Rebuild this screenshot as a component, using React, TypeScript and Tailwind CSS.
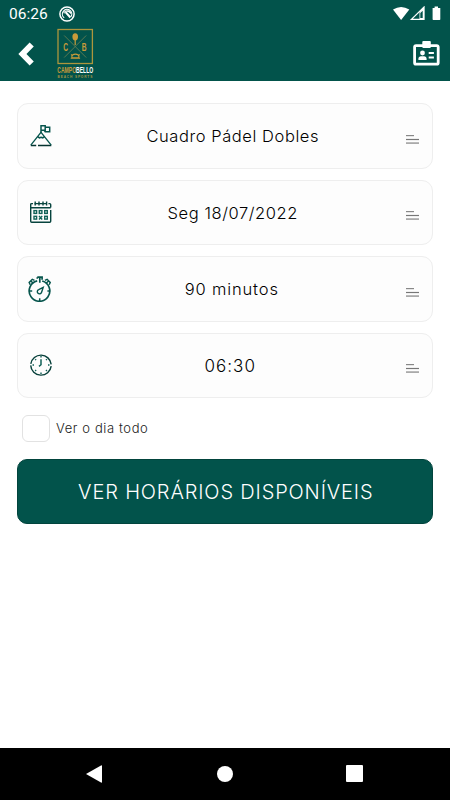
import { ReactNode } from 'react';

interface FieldRowProps {
    icon: ReactNode;
    label: string;
    className: string;
}

function MountainFlagIcon() {
    return (
        <svg width="24" height="24" viewBox="0 0 24 24" fill="none" stroke="#07554d" strokeWidth="1.3">
            <path d="M1.8 21.4H7.2M9 21.4h13.3" stroke="#04332f" strokeWidth="1.5" />
            <path d="M1.8 21.2 12 8.3l10.2 12.9" />
            <path d="M12 9V1M12 1.7h4.2v4.6H12M16.2 3.3h4.5v4.4h-4.5l-1-1.4M8.7 12.6l1.7 1.2 1.7-.6 1.7.6 1.7-1.2" strokeWidth="1.5" />
        </svg>
    );
}

function CalendarIcon() {
    return (
        <svg width="24" height="24" viewBox="0 0 24 24" fill="none" stroke="#07443e" strokeWidth="1.4">
            <path d="M4 3.6H2.7q-1 0-1 1v16.7q0 1 1 1h18q1 0 1-1V10M5.6 3.6h12M19.4 3.6h1.3q1 0 1 1v3M1.7 7.7h20" />
            <path d="M6.2 1.5v4M10 1.5v4M14 1.5v4M17.6 1.5v4" />
            <g stroke="#116258">
                <rect x="5" y="10.6" width="2.6" height="2.8" />
                <rect x="10.3" y="10.6" width="2.6" height="2.8" />
                <rect x="15.7" y="10.6" width="2.6" height="2.8" />
                <rect x="5" y="16.3" width="2.6" height="2.8" />
                <path d="m10 16 3.2 3.4m0-3.4L10 19.4" />
                <rect x="15.7" y="16.3" width="2.6" height="2.8" />
            </g>
        </svg>
    );
}

function StopwatchIcon() {
    return (
        <svg className="-ml-[2px]" width="24" height="26" viewBox="0 0 24 26" fill="none" stroke="#07554d" strokeWidth="1.7">
            <path d="M9.2 4.9a10.3 10.3 0 1 0 5 .1M9.3 1.2h4.8v2.6M9.3 1.2v1.5M11.8 2v4.7" />
            <path d="m2.2 8.7-1-2.2 3.1-3.2 2.2 1.1M3.1 5.2l2.2 2M21.2 8.7l1-2.2-3.1-3.2-2.2 1.1M20.3 5.2l-2.2 2" strokeWidth="1.5" />
            <path d="M1.7 15.1h2.5M19.4 15.1h2.5M11.7 25v-2.8" strokeWidth="1.5" />
            <path d="m15.2 11.4-4.5 2.2a2.2 2.2 0 1 0 2.9 2.7Z" strokeWidth="1.4" />
        </svg>
    );
}

function ClockIcon() {
    return (
        <svg width="24" height="24" viewBox="0 0 24 24" fill="none" stroke="#063f39">
            <path d="M1.8 10.8a10.3 10.3 0 0 1 20.4.5M22.2 13.2a10.3 10.3 0 0 1-20.5-.8" strokeWidth="1.4" />
            <path d="M12 6.3v5.4l-2 1.7" stroke="#116258" strokeWidth="1.5" />
            <path d="M12 3v1.4M12 19.5V21M3.5 12H5M19 12h1.5M6.2 6.2l.9.9M17 17l.9.9M17.9 6.2l-.9.9M7.1 17l-.9.9" stroke="#116258" strokeWidth="1.4" />
        </svg>
    );
}

function FieldRow({ icon, label, className }: FieldRowProps) {
    return (
        <button className="flex h-[65.5px] w-full items-center rounded-[11px] border border-[#eeeeee] bg-[#fdfdfd] pr-[13px] pl-[11px]">
            <span className="flex w-6 justify-center">{icon}</span>
            <span className={`flex-1 pt-[2px] text-center font-light whitespace-nowrap text-black ${className}`}>{label}</span>
            <svg className="mt-[7px]" width="13" height="9" viewBox="0 0 13 9">
                <path d="M0 .6h8" stroke="#888" strokeWidth="1.2" />
                <path d="M0 4.5h13" stroke="#777" strokeWidth="1.2" />
                <path d="M0 8.1h13" stroke="#aaa" strokeWidth="1.8" />
            </svg>
        </button>
    );
}

function Logo() {
    return (
        <svg width="42" height="53" viewBox="0 0 42 53">
            <rect x="1" y="2.5" width="34.4" height="34" fill="none" stroke="#ad963d" strokeWidth="1.3" />
            <path d="m7.2 8.5 22 22m0-22-22 22" stroke="#6f8253" strokeWidth=".8" />
            <ellipse cx="18.2" cy="9.8" rx="2.8" ry="3.6" fill="#c79b3a" />
            <path d="M18.2 12v6" stroke="#c79b3a" strokeWidth="1.2" />
            <path d="M14.9 30.8v-1.5q.3-2.2 3.5-2.2t3.5 2.2v1.5ZM13.7 31.2h9.4M14 27.5l1.2 1M22.7 27.5l-1.2 1" fill="none" stroke="#c79b3a" strokeWidth="1.1" />
            <g fontFamily="'Liberation Sans', sans-serif" fontWeight="700" fill="#c79b3a">
                <text transform="translate(6.3 24) scale(.58 1)" fontSize="11.5">C</text>
                <text transform="translate(24.7 24) scale(.58 1)" fontSize="11.5">B</text>
                <text transform="translate(.3 45.8) scale(.55 1)" fontSize="9.2">
                    CAMPO<tspan fill="#fff">BELLO</tspan>
                </text>
                <text x=".6" y="50.8" fontSize="3.2" letterSpacing=".85" fill="#a79342">BEACH SPORTS</text>
            </g>
        </svg>
    );
}

function Header() {
    return (
        <header className="h-[81px] bg-[#02534b] text-white">
            <div className="flex h-[27px] items-center pr-2 pl-[9px]">
                <span className="mt-[2px] font-['Roboto',sans-serif] text-[15.5px] leading-none">06:26</span>
                <svg className="ml-[11.5px]" width="16" height="16" viewBox="0 0 16 16" fill="none" stroke="white">
                    <circle cx="8" cy="8" r="7.1" strokeWidth="1.5" />
                    <path d="M5.2 11.8A4.7 4.7 0 1 1 12 10.7" strokeWidth="1.2" />
                    <path d="M4.4 6.5q2-3.3 5.8-2 2.5 1.4 2.2 4-3-3.4-5.2-3.1-1.8.4-2.1 2.5Z" fill="white" stroke="none" />
                    <path d="m6.5 6 4.9 5.5" strokeWidth="2" />
                </svg>
                <svg className="ml-auto" width="49" height="16" viewBox="0 0 49 16">
                    <path d="M0 3.5Q8.1-1.5 16.3 3.5L8.1 14Z" fill="white" />
                    <path d="M18.4 13.4 31 1.1v12.3Z" fill="none" stroke="white" strokeWidth="1.3" />
                    <path d="M26.5 6 31 1.1v12.3h-4.5Z" fill="white" />
                    <path d="m27.3 7 2.4-2.3v7.3h-2.4Z" fill="#02534b" />
                    <path d="M39.6 2h2V.5H45V2h2.3v11.3q0 .7-.7.7h-6.3q-.7 0-.7-.7Z" fill="white" />
                </svg>
            </div>
            <div className="flex h-[54px] items-start pr-[10px] pl-[18px]">
                <svg className="mt-[14.5px]" width="17" height="24" viewBox="0 0 17 24">
                    <path d="M13.7 2.4 4.4 12l9.3 9.6" fill="none" stroke="white" strokeWidth="5.8" />
                </svg>
                <div className="ml-[22px]">
                    <Logo />
                </div>
                <svg className="mt-[14px] ml-auto" width="27" height="25" viewBox="0 0 27 25">
                    <rect x="1.6" y="4.6" width="23.6" height="18.6" rx="1.5" fill="none" stroke="white" strokeWidth="2.8" />
                    <rect x="9.3" y="0" width="8.5" height="7" rx="1" fill="white" />
                    <circle cx="9.5" cy="12" r="2.4" fill="white" />
                    <path d="M5.4 18.9v-1.4q0-2 2.3-2.2h3.6q2.3.2 2.3 2.2v1.4ZM15.7 11h5.2v2h-5.2ZM15.7 15.4h5.2v2.2h-5.2Z" fill="white" />
                </svg>
            </div>
        </header>
    );
}

export default function App() {
    return (
        <div className="flex h-[800px] w-[450px] flex-col overflow-hidden bg-white font-['Inter',sans-serif]">
            <Header />

            <main className="flex-1 pt-[22px] pr-[17px] pl-[16.5px]">
                <div className="flex flex-col gap-[11px]">
                    <FieldRow icon={<MountainFlagIcon />} label="Cuadro Pádel Dobles" className="pl-[7px] text-[16.5px] tracking-[0.57px]" />
                    <FieldRow icon={<CalendarIcon />} label="Seg 18/07/2022" className="pl-[7px] text-[16.5px] tracking-[0.57px]" />
                    <FieldRow icon={<StopwatchIcon />} label="90 minutos" className="pl-[5px] text-[16.5px] tracking-[0.85px]" />
                    <FieldRow icon={<ClockIcon />} label="06:30" className="pl-[2px] text-[17px] tracking-[1px]" />
                </div>

                <label className="mt-[16.5px] flex items-center pl-[5.5px]">
                    <span className="h-[27.5px] w-[28px] rounded-[6px] border border-[#e2e2e2] bg-white" />
                    <span className="ml-[6px] pt-px text-[13px] font-light tracking-[0.6px] text-[#222]">Ver o dia todo</span>
                </label>

                <button className="mt-[16.5px] h-[65.5px] w-full rounded-[10px] border border-[#02443d] bg-[#02534b] pt-px pl-[8px] pr-[6px] text-center text-[20px] font-light tracking-[0.85px] whitespace-nowrap text-white">
                    VER HORÁRIOS DISPONÍVEIS
                </button>
            </main>

            <nav className="flex h-[52.5px] items-center bg-black pr-[87px] pl-[86px]">
                <svg width="16" height="18" viewBox="0 0 16 18">
                    <path d="M0 9 15 .5Q16 0 16 1v16q0 1-1 .5Z" fill="white" />
                </svg>
                <span className="ml-[115px] h-4 w-4 rounded-full bg-white" />
                <span className="ml-auto h-[17px] w-[17px] rounded-[1px] bg-white" />
            </nav>
        </div>
    );
}
